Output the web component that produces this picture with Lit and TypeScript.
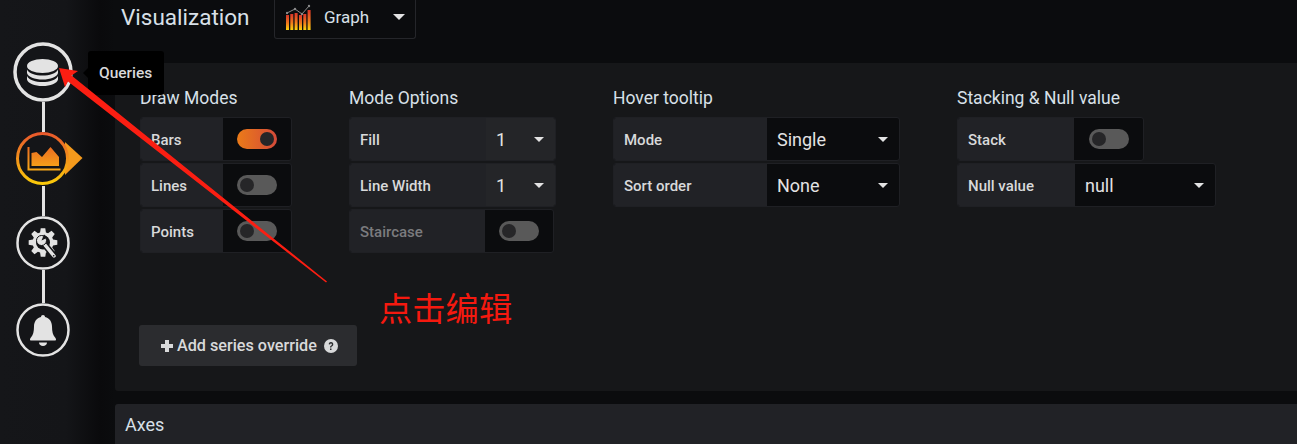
import { LitElement, html, css, svg } from "lit";
import { customElement } from "lit/decorators.js";

type Row =
  | { label: string; kind: "switch"; on?: boolean; dim?: boolean; lw: number; w: number }
  | { label: string; kind: "select"; value: string; dark?: boolean; lw: number; w: number };

const groups: { title: string; width: number; rows: Row[] }[] = [
  {
    title: "Draw Modes",
    width: 151,
    rows: [
      { label: "Bars", kind: "switch", on: true, lw: 82, w: 152 },
      { label: "Lines", kind: "switch", lw: 82, w: 152 },
      { label: "Points", kind: "switch", lw: 82, w: 152 },
    ],
  },
  {
    title: "Mode Options",
    width: 206,
    rows: [
      { label: "Fill", kind: "select", value: "1", lw: 136, w: 207 },
      { label: "Line Width", kind: "select", value: "1", lw: 136, w: 207 },
      { label: "Staircase", kind: "switch", dim: true, lw: 135, w: 205 },
    ],
  },
  {
    title: "Hover tooltip",
    width: 286,
    rows: [
      { label: "Mode", kind: "select", value: "Single", dark: true, lw: 153, w: 287 },
      { label: "Sort order", kind: "select", value: "None", dark: true, lw: 153, w: 287 },
    ],
  },
  {
    title: "Stacking & Null value",
    width: 258,
    rows: [
      { label: "Stack", kind: "switch", lw: 116, w: 187 },
      { label: "Null value", kind: "select", value: "null", dark: true, lw: 117, w: 259 },
    ],
  },
];

// gear outline, teeth computed around the centre
function gearPath(cx: number, cy: number, ro: number, ri: number, teeth: number) {
  const pts: string[] = [];
  const step = (Math.PI * 2) / teeth;
  for (let i = 0; i < teeth; i++) {
    const a = i * step;
    const corners: [number, number][] = [
      [ri, a - step * 0.36],
      [ro, a - step * 0.2],
      [ro, a + step * 0.2],
      [ri, a + step * 0.36],
    ];
    for (const [r, t] of corners) {
      pts.push(`${(cx + r * Math.cos(t)).toFixed(2)} ${(cy + r * Math.sin(t)).toFixed(2)}`);
    }
  }
  return "M" + pts.join("L") + "Z";
}

@customElement("app-root")
export class AppRoot extends LitElement {
  static styles = css`
    :host {
      display: block;
      position: relative;
      height: 444px;
      overflow: hidden;
      background: #0b0c0e;
      font-family: Roboto, "Liberation Sans", sans-serif;
      color: #d8d9da;
    }
    .page {
      display: flex;
      height: 444px;
    }
    .side {
      width: 115px;
      flex: none;
      box-sizing: border-box;
      padding: 42px 0 0 13px;
      background: linear-gradient(90deg, #151619 0, #141518 66px, #0a0a0c 100px, #0b0c0e 115px);
    }
    .steps {
      width: 60px;
      display: flex;
      flex-direction: column;
      align-items: center;
    }
    .step {
      display: block;
      flex: none;
    }
    .link {
      width: 3px;
      background: #e3e3e3;
      flex: none;
    }
    .main {
      flex: 1;
      min-width: 0;
      display: flex;
      flex-direction: column;
    }
    .head {
      height: 63px;
      flex: none;
      display: flex;
      align-items: flex-start;
      padding-left: 6px;
    }
    .head h2 {
      margin: 0;
      width: 153px;
      font-size: 22.500px;
      font-weight: 400;
      line-height: 35px;
      color: #d8e0e8;
    }
    .viz {
      width: 142px;
      height: 39px;
      box-sizing: border-box;
      border: 1px solid #25262a;
      border-top: none;
      border-radius: 0 0 3px 3px;
      display: flex;
      align-items: center;
      padding: 0 10px 4px 11px;
      font-size: 17px;
      color: #d8e0e8;
    }
    .viz svg {
      margin-right: 13px;
    }
    .caret {
      width: 0;
      height: 0;
      border-left: 5px solid transparent;
      border-right: 5px solid transparent;
      border-top: 5px solid #e3e3e3;
      margin-left: auto;
    }
    .viz .caret {
      border-left-width: 6px;
      border-right-width: 6px;
      border-top-width: 6px;
    }
    .panel {
      height: 328px;
      flex: none;
      box-sizing: border-box;
      background: #161719;
      border-radius: 3px 0 0 3px;
      padding: 25px 0 0 25px;
    }
    .cols {
      display: flex;
      gap: 58px;
      height: 168px;
    }
    .group h5 {
      margin: 0 0 9px;
      font-size: 17.500px;
      font-weight: 400;
      line-height: 20px;
      color: #d8e0e8;
    }
    .row {
      display: flex;
      height: 44px;
      box-sizing: border-box;
      margin-bottom: 2px;
      border: 1px solid #1f2024;
      border-radius: 3px;
      overflow: hidden;
      background: #0b0c0e;
    }
    .label {
      flex: none;
      box-sizing: border-box;
      display: flex;
      align-items: center;
      padding: 1px 0 0 10px;
      background: #212226;
      font-size: 15px;
      font-weight: 500;
      color: #d8d9da;
    }
    .label.dim {
      color: #7b7b7e;
    }
    .cell {
      flex: 1;
      display: flex;
      align-items: center;
      padding: 0 11px 0 10px;
      font-size: 18px;
      color: #e3e3e3;
    }
    .cell.soft {
      background: #242528;
    }
    .cell.toggle {
      justify-content: center;
      padding: 0;
    }
    .switch {
      width: 40px;
      height: 20px;
      box-sizing: border-box;
      border-radius: 10px;
      background: #595959;
      padding: 3px;
      display: flex;
    }
    .switch.on {
      background: linear-gradient(90deg, #eb7b18, #d44a3a);
      justify-content: flex-end;
    }
    .knob {
      width: 14px;
      height: 14px;
      border-radius: 50%;
      background: #262628;
    }
    .add {
      margin-top: 69px;
      margin-left: -1px;
      width: 218px;
      height: 41px;
      box-sizing: border-box;
      display: flex;
      align-items: center;
      padding-left: 21px;
      gap: 3px;
      background: #2b2c2f;
      border-radius: 3px;
      font-size: 16.200px;
      font-weight: 500;
      color: #d8d9da;
    }
    .add svg.help {
      margin-left: 4px;
    }
    .axes {
      margin-top: 13px;
      flex: 1;
      min-height: 0;
      background: #212226;
      border-radius: 3px 0 0 0;
      padding: 10px 10px 0;
      font-size: 18px;
      line-height: 22px;
      color: #d8e0e8;
    }
    .tip {
      position: absolute;
      left: 88px;
      top: 51px;
      width: 76px;
      height: 44px;
      box-sizing: border-box;
      background: #000;
      border-radius: 3px;
      padding-left: 11px;
      display: flex;
      align-items: center;
      font-size: 15.500px;
      font-weight: 500;
      color: #d8d9da;
    }
    .tip::before {
      content: "";
      position: absolute;
      left: -5px;
      top: 17px;
      border-top: 5px solid transparent;
      border-bottom: 5px solid transparent;
      border-right: 5px solid #000;
    }
    .mark {
      position: absolute;
      left: 0;
      top: 0;
      pointer-events: none;
    }
    .note {
      position: absolute;
      left: 379px;
      top: 285px;
      font-family: "Noto Sans CJK SC", sans-serif;
      font-size: 33.300px;
      line-height: 44px;
      color: #f5190f;
    }
  `;

  private stepIcons() {
    return html`
      <svg class="step" width="60" height="60" viewBox="0 0 60 60">
        <circle cx="30" cy="30" r="28" fill="#141518" stroke="#e3e3e3" stroke-width="3.500" />
        <g fill="#e3e3e3">
          <ellipse cx="29.500" cy="24" rx="15.500" ry="7" />
          <path d="M14 27.500c2 4 8.500 6 15.500 6s13.500-2 15.500-6v3.500c-1 4-7.500 6.500-15.500 6.500s-14.500-2.500-15.500-6.500z" />
          <path d="M14 34c2 4 8.500 6 15.500 6s13.500-2 15.500-6v3.500c-1 4-7.500 6.500-15.500 6.500s-14.500-2.500-15.500-6.500z" />
        </g>
      </svg>
      <div class="link" style="height:30px"></div>
      <svg class="step" width="68" height="56" viewBox="0 0 68 56" style="margin-left:11px;margin-top:-1px">
        <defs>
          <linearGradient id="og" x1="0" y1="0" x2="0" y2="1">
            <stop offset="0" stop-color="#e9592b" />
            <stop offset="1" stop-color="#fbca0a" />
          </linearGradient>
          <linearGradient id="og2" gradientUnits="userSpaceOnUse" x1="0" y1="15" x2="0" y2="38">
            <stop offset="0" stop-color="#eb6a22" />
            <stop offset="1" stop-color="#f7a618" />
          </linearGradient>
        </defs>
        <path d="M50 11L67.500 27L50 44z" fill="#f59a1c" />
        <circle cx="27.500" cy="27.500" r="25" fill="#141518" stroke="url(#og)" stroke-width="3" />
        <path d="M12.500 16h2v21.500h31v2h-33z" fill="url(#og2)" />
        <path d="M16.500 22l5-1 5.500 5 8.500-10 8.500 10v9h-27.500z" fill="url(#og2)" />
      </svg>
      <div class="link" style="height:30px;margin-top:-1px"></div>
      ${this.ring(svg`
        <path d=${gearPath(27, 26.500, 14.500, 10.500, 8)} fill="#e3e3e3" />
        <circle cx="27" cy="26.500" r="7" fill="#141518" />
        <path d="M27 26.500L38 40" stroke="#141518" stroke-width="6.500" stroke-linecap="round" />
        <path d="M27 26.500L38 40" stroke="#e3e3e3" stroke-width="3.500" stroke-linecap="round" />
        <circle cx="25.500" cy="24.500" r="5" fill="#e3e3e3" stroke="#141518" stroke-width="1" />
        <path d="M25.500 24.500L28 18.500L32 21.500z" fill="#141518" />
        <circle cx="37.700" cy="39.700" r=".8" fill="#141518" />
      `)}
      <div class="link" style="height:33px"></div>
      ${this.ring(svg`
        <path d="M27 12c1.200 0 2 .8 2 2 4.500 1 7 4.800 7 9.500 0 5 1 8.500 2.700 10.500 1 1.100 1.300 1.800 1.300 2.500 0 .6-.4 1-1 1h-24c-.6 0-1-.4-1-1 0-.7.3-1.400 1.300-2.500 1.700-2 2.700-5.500 2.700-10.500 0-4.700 2.500-8.500 7-9.500 0-1.200.8-2 2-2z" fill="#e3e3e3" />
        <path d="M23 39.500h8c0 2-1.800 3.500-4 3.500s-4-1.500-4-3.500z" fill="#e3e3e3" />
      `)}
    `;
  }

  private ring(inner: unknown) {
    return html`<svg class="step" width="54" height="54" viewBox="0 0 54 54">
      <circle cx="27" cy="27" r="25.500" fill="#141518" stroke="#e3e3e3" stroke-width="2.500" />
      ${inner}
    </svg>`;
  }

  private graphIcon() {
    const bars = [
      [0, 11],
      [4.300, 10],
      [8.600, 9],
      [13, 11],
      [17.300, 10],
      [21.600, 6],
    ];
    return html`<svg width="25" height="26" viewBox="0 0 25 26">
      <defs>
        <linearGradient id="bg" x1="0" y1="0" x2="0" y2="1">
          <stop offset="0" stop-color="#d8352a" />
          <stop offset="0.55" stop-color="#f0791c" />
          <stop offset="1" stop-color="#fbd30c" />
        </linearGradient>
      </defs>
      ${bars.map(
        ([x, y]) => svg`<rect x=${x} y=${y} width="3" height=${26 - y} fill="url(#bg)" />`
      )}
      <path d="M1 9L9 5L16 10L23 2" fill="none" stroke="#8a8a8a" stroke-width="1" />
      <circle cx="1" cy="9" r="1.200" fill="#8a8a8a" />
      <circle cx="9" cy="5" r="1.200" fill="#8a8a8a" />
      <circle cx="16" cy="10" r="1.200" fill="#8a8a8a" />
      <circle cx="23" cy="2" r="1.200" fill="#8a8a8a" />
    </svg>`;
  }

  private renderRow(r: Row) {
    return html`<div class="row" style="width:${r.w}px">
      <div
        class="label ${r.kind === "switch" && r.dim ? "dim" : ""}"
        style="width:${r.lw}px"
      >
        ${r.label}
      </div>
      ${r.kind === "switch"
        ? html`<div class="cell toggle">
            <div class="switch ${r.on ? "on" : ""}"><div class="knob"></div></div>
          </div>`
        : html`<div class="cell ${r.dark ? "" : "soft"}">
            ${r.value}<span class="caret"></span>
          </div>`}
    </div>`;
  }

  render() {
    return html`
      <div class="page">
        <div class="side"><div class="steps">${this.stepIcons()}</div></div>
        <div class="main">
          <div class="head">
            <h2>Visualization</h2>
            <div class="viz">${this.graphIcon()}Graph<span class="caret"></span></div>
          </div>
          <div class="panel">
            <div class="cols">
              ${groups.map(
                (g) => html`<div class="group" style="width:${g.width}px">
                  <h5>${g.title}</h5>
                  ${g.rows.map((r) => this.renderRow(r))}
                </div>`
              )}
            </div>
            <div class="add">
              <svg width="14" height="14" viewBox="0 0 14 14">
                <path d="M5 1h4v4h4v4H9v4H5V9H1V5h4z" fill="#d8d9da" />
              </svg>
              Add series override
              <svg class="help" width="14" height="14" viewBox="0 0 14 14">
                <circle cx="7" cy="7" r="7" fill="#d8d9da" />
                <path d="M4.700 5.300a2.300 2.300 0 1 1 3.500 2c-.7.400-.8.700-.8 1.200H6c0-1 .3-1.600 1.200-2.100.5-.3.700-.6.700-1a.9.900 0 0 0-1.800 0zM6 9.500h1.500V11H6z" fill="#2b2c2f" />
              </svg>
            </div>
          </div>
          <div class="axes">Axes</div>
        </div>
      </div>
      <div class="tip">Queries</div>
      <svg class="mark" width="1297" height="444" viewBox="0 0 1297 444">
        <path
          d="M59 68L78 71L71.500 75.500L327 281.500L326 282.500L68 81.500L65 87z"
          fill="#fb1e12"
        />
      </svg>
      <div class="note">点击编辑</div>
    `;
  }
}
